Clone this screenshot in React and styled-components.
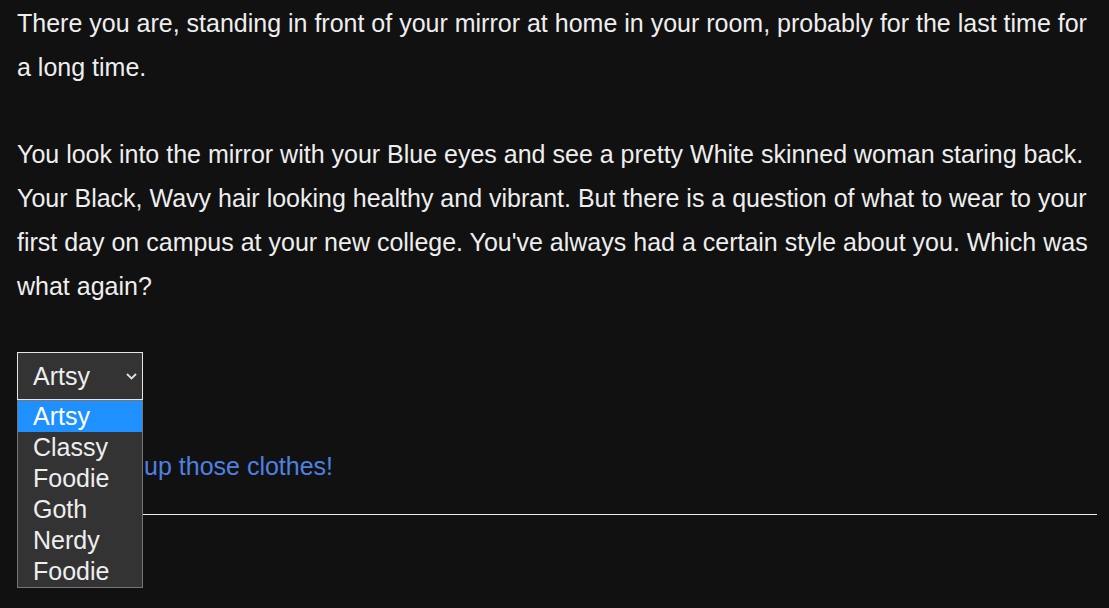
import React from "react";
import styled, { createGlobalStyle } from "styled-components";

const Global = createGlobalStyle`
  html, body { margin: 0; padding: 0; background: #111; }
  body {
    color: #eee;
    font-family: "Liberation Sans", Arial, sans-serif;
    font-size: 25px;
    line-height: 1.75;
  }
`;

const Passage = styled.main`
  box-sizing: border-box;
  min-height: 100vh;
  padding: 2px 12px 0 17px;
`;

const Para = styled.p`
  margin: 0 0 ${(p) => (p.$gap ? "43.75px" : "0")} 0;
`;

const SelectWrap = styled.div`
  position: relative;
  display: block;
  width: 126px;
  margin: 0 0 45px 0;
`;

const SelectBox = styled.div`
  box-sizing: border-box;
  width: 126px;
  height: 48px;
  border: 1px solid #e6e6e6;
  background: #333;
  color: #eee;
  display: flex;
  align-items: center;
  justify-content: space-between;
  padding: 0 5px 0 15px;
  line-height: 1;
`;

const Chevron = styled.svg`
  width: 11px;
  height: 7px;
  display: block;
  margin-top: 1px;
`;

const ListBox = styled.ul`
  position: absolute;
  top: 100%;
  left: 0;
  box-sizing: border-box;
  width: 126px;
  height: 188px;
  margin: 0;
  padding: 0;
  list-style: none;
  background: #333;
  border: 1px solid #767676;
  z-index: 2;
`;

const Option = styled.li`
  height: 31px;
  line-height: 31px;
  padding-left: 15px;
  background: ${(p) => (p.$active ? "#1e90ff" : "transparent")};
  color: ${(p) => (p.$active ? "#fff" : "#eee")};
  white-space: nowrap;
`;

const Row = styled.div``;

const Link = styled.a`
  color: #4f80e2;
  text-decoration: none;
  cursor: pointer;
`;

const Rule = styled.hr`
  margin: 25px 0 0 0;
  border: none;
  border-top: 1px solid #eee;
  height: 0;
`;

const options = ["Artsy", "Classy", "Foodie", "Goth", "Nerdy", "Foodie"];

export default function App() {
  return (
    <>
      <Global />
      <Passage>
        <Para $gap>
          There you are, standing in front of your mirror at home in your room,
          probably for the last time for a long time.
        </Para>
        <Para $gap>
          You look into the mirror with your Blue eyes and see a pretty White
          skinned woman staring back. Your Black, Wavy hair looking healthy and
          vibrant. But there is a question of what to wear to your first day on
          campus at your new college. You've always had a certain style about
          you. Which was what again?
        </Para>
        <SelectWrap>
          <SelectBox>
            <span>Artsy</span>
            <Chevron viewBox="0 0 11 7">
              <path d="M1 1 L5.5 5.5 L10 1" fill="none" stroke="#e0e0e0" strokeWidth="1.8" />
            </Chevron>
          </SelectBox>
          <ListBox>
            {options.map((o, i) => (
              <Option key={i} $active={i === 0}>
                {o}
              </Option>
            ))}
          </ListBox>
        </SelectWrap>
        <Row>
          <Link>Let's dress up those clothes!</Link>
        </Row>
        <Rule />
      </Passage>
    </>
  );
}
